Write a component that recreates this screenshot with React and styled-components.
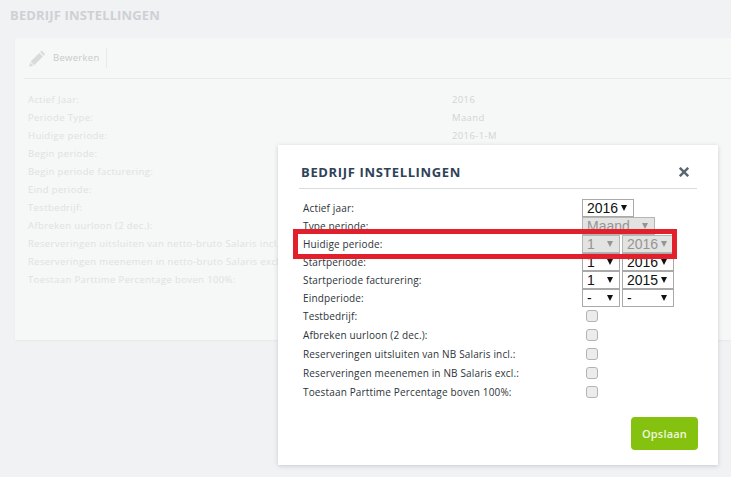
import React from "react";
import styled, { createGlobalStyle } from "styled-components";

const Global = createGlobalStyle`
  html, body { margin: 0; padding: 0; background: #f0f2f4; }
  body { width: 731px; height: 477px; overflow: hidden; font-family: "Open Sans", "Noto Sans", sans-serif; }
`;

const Page = styled.div`
  position: relative;
  width: 731px;
  height: 477px;
  overflow: hidden;
  padding: 8px 0 0 15px;
  box-sizing: border-box;
  background: #f0f2f4;
`;
const PageTitle = styled.h1`
  margin: 0 0 15px -5px;
  height: 15px;
  font: 700 13px/15px "Open Sans", sans-serif;
  letter-spacing: 0.15px;
  color: #ced1d4;
`;
const Card = styled.section`
  height: 302px;
  background: #f6f7f7;
  box-shadow: 0 1px 2px #e6e8ea;
  padding: 0 0 0 9px;
  box-sizing: border-box;
`;
const Toolbar = styled.div`
  display: flex;
  align-items: center;
  height: 40px;
  border-bottom: 1px solid #e9eaea;
  padding-left: 5px;
`;
const EditLabel = styled.span`
  font-size: 9.5px;
  letter-spacing: 0.3px;
  color: #c9cacb;
  margin-left: 7px;
  padding-right: 6px;
  border-right: 1px solid #e8e9e9;
  line-height: 20px;
`;
const DetailList = styled.dl`
  display: grid;
  grid-template-columns: 424px 1fr;
  grid-auto-rows: 18px;
  margin: 12px 0 0 4px;
  font-size: 9.5px;
  letter-spacing: 0.38px;
  line-height: 18px;
  color: #e0e1e2;
`;
const Term = styled.dt`
  white-space: nowrap;
`;
const Value = styled.dd`
  margin: 0;
  color: #d3d4d5;
`;
const Modal = styled.div`
  position: absolute;
  left: 278px;
  top: 145px;
  width: 440px;
  height: 320px;
  box-sizing: border-box;
  background: #fff;
  box-shadow: 0 1px 4px rgba(120, 130, 140, 0.35);
  padding: 0 21px 0 21px;
`;
const ModalHeader = styled.header`
  display: flex;
  align-items: flex-end;
  justify-content: space-between;
  height: 44px;
  border-bottom: 1px solid #d9dcdf;
  padding: 0 8px 8px 2px;
  box-sizing: border-box;
`;
const ModalTitle = styled.h2`
  margin: 0;
  font: 700 13px/16px "Open Sans", sans-serif;
  letter-spacing: 0.65px;
  color: #2f4258;
`;
const CloseIcon = styled.svg`
  margin-bottom: 3px;
`;
const Form = styled.form`
  padding: 10px 0 0 4px;
`;
const Row = styled.div`
  display: grid;
  grid-template-columns: 279px auto;
  align-items: center;
  height: ${(p) => (p.$check ? 19 : 18)}px;
  font-size: 10px;
  letter-spacing: 0.15px;
  color: #2d3338;
  white-space: nowrap;
`;
const CheckGroup = styled.div`
  margin-top: -1px;
`;
const Selects = styled.div`
  display: flex;
  gap: 2px;
`;
const Select = styled.div`
  display: flex;
  align-items: center;
  justify-content: space-between;
  box-sizing: border-box;
  width: ${(p) => p.$w}px;
  height: 18px;
  padding: 0 6px 0 4px;
  background: ${(p) => (p.$disabled ? "#e3e3e1" : "#fff")};
  border: 1px solid ${(p) => (p.$disabled ? "#b5b5b5" : "#a9a9a9")};
  color: ${(p) => (p.$disabled ? "#959595" : "#111")};
  font: 14px/16px "Liberation Sans", Arial, sans-serif;
  letter-spacing: 0;
`;
const Arrow = styled.i`
  width: 0;
  height: 0;
  border-left: 3px solid transparent;
  border-right: 3px solid transparent;
  border-top: 6px solid ${(p) => (p.$disabled ? "#959595" : "#111")};
`;
const Check = styled.span`
  display: block;
  box-sizing: border-box;
  width: 12px;
  height: 12px;
  margin-left: 4px;
  border: 1px solid #b3b3b3;
  border-radius: 3px;
  background: #ececec;
`;
const Footer = styled.div`
  display: flex;
  justify-content: flex-end;
  margin: 16px -1px 0 0;
`;
const SaveButton = styled.button`
  width: 67px;
  height: 33px;
  border: 0;
  border-radius: 4px;
  background: #84c20f;
  color: #eef7dc;
  font: 600 11px/33px "Open Sans", sans-serif;
  letter-spacing: 0.2px;
  padding: 0;
`;
const Highlight = styled.div`
  position: absolute;
  left: 293px;
  top: 229px;
  width: 384px;
  height: 30px;
  box-sizing: border-box;
  border: 5px solid #e2202c;
  pointer-events: none;
`;

const details = [
  ["Actief Jaar:", "2016"],
  ["Periode Type:", "Maand"],
  ["Huidige periode:", "2016-1-M"],
  ["Begin periode:", ""],
  ["Begin periode facturering:", ""],
  ["Eind periode:", ""],
  ["Testbedrijf:", ""],
  ["Afbreken uurloon (2 dec.):", ""],
  ["Reserveringen uitsluiten van netto-bruto Salaris incl.:", ""],
  ["Reserveringen meenemen in netto-bruto Salaris excl.:", ""],
  ["Toestaan Parttime Percentage boven 100%:", ""],
];

const selectRows = [
  ["Actief jaar:", [["2016", 52]]],
  ["Type periode:", [["Maand", 73, true]]],
  ["Huidige periode:", [["1", 38, true], ["2016", 52, true]]],
  ["Startperiode:", [["1", 38], ["2016", 52]]],
  ["Startperiode facturering:", [["1", 38], ["2015", 52]]],
  ["Eindperiode:", [["-", 38], ["-", 52]]],
];
const checks = [
  "Testbedrijf:",
  "Afbreken uurloon (2 dec.):",
  "Reserveringen uitsluiten van NB Salaris incl.:",
  "Reserveringen meenemen in NB Salaris excl.:",
  "Toestaan Parttime Percentage boven 100%:",
];

export default function App() {
  return (
    <Page>
      <Global />
      <PageTitle>BEDRIJF INSTELLINGEN</PageTitle>
      <Card>
        <Toolbar>
          <svg width="17" height="17" viewBox="0 0 17 17" fill="#d9dadb">
            <path d="M12.6 0.6 L16.2 4.2 L14.7 5.7 L11.1 2.1 Z M10.3 2.9 L13.9 6.5 L5.2 15.2 L1.6 11.6 Z M1.1 12.4 L4.4 15.7 L0.2 16.8 Z" />
          </svg>
          <EditLabel>Bewerken</EditLabel>
        </Toolbar>
        <DetailList>
          {details.map(([t, v]) => (
            <React.Fragment key={t}>
              <Term>{t}</Term>
              <Value>{v}</Value>
            </React.Fragment>
          ))}
        </DetailList>
      </Card>
      <Modal>
        <ModalHeader>
          <ModalTitle>BEDRIJF INSTELLINGEN</ModalTitle>
          <CloseIcon width="10" height="10" viewBox="0 0 10 10" stroke="#5c6670" strokeWidth="2.4">
            <path d="M0.8 0.8 L9.2 9.2 M9.2 0.8 L0.8 9.2" />
          </CloseIcon>
        </ModalHeader>
        <Form>
          {selectRows.map(([label, sels]) => (
            <Row key={label}>
              <span>{label}</span>
              <Selects>
                {sels.map(([v, w, d], i) => (
                  <Select key={i} $w={w} $disabled={d}>
                    {v}
                    <Arrow $disabled={d} />
                  </Select>
                ))}
              </Selects>
            </Row>
          ))}
          <CheckGroup>
            {checks.map((c) => (
              <Row key={c} $check>
                <span>{c}</span>
                <Check />
              </Row>
            ))}
          </CheckGroup>
          <Footer>
            <SaveButton type="button">Opslaan</SaveButton>
          </Footer>
        </Form>
      </Modal>
      <Highlight />
    </Page>
  );
}
